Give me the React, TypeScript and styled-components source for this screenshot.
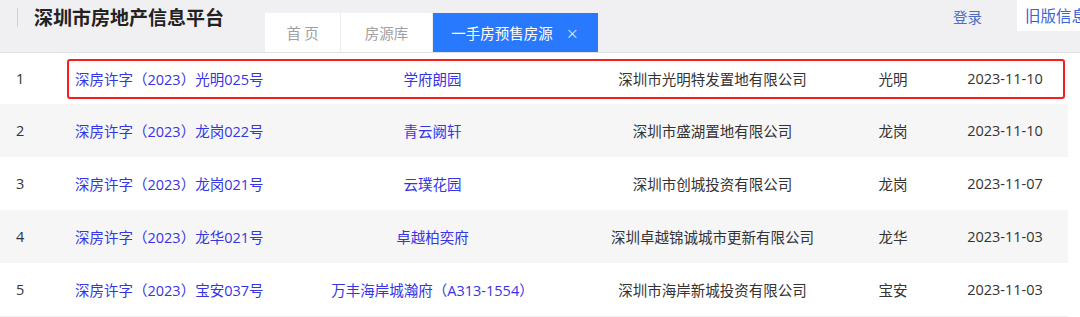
import { FC } from "react";
import styled, { createGlobalStyle } from "styled-components";

type Row = {
    permit: string;
    project: string;
    company: string;
    district: string;
    date: string;
};

const rows: Row[] = [
    { permit: "深房许字（2023）光明025号", project: "学府朗园", company: "深圳市光明特发置地有限公司", district: "光明", date: "2023-11-10" },
    { permit: "深房许字（2023）龙岗022号", project: "青云阙轩", company: "深圳市盛湖置地有限公司", district: "龙岗", date: "2023-11-10" },
    { permit: "深房许字（2023）龙岗021号", project: "云璞花园", company: "深圳市创城投资有限公司", district: "龙岗", date: "2023-11-07" },
    { permit: "深房许字（2023）龙华021号", project: "卓越柏奕府", company: "深圳卓越锦诚城市更新有限公司", district: "龙华", date: "2023-11-03" },
    { permit: "深房许字（2023）宝安037号", project: "万丰海岸城瀚府（A313-1554）", company: "深圳市海岸新城投资有限公司", district: "宝安", date: "2023-11-03" },
];

const GlobalStyle = createGlobalStyle`
body {
    margin: 0;
    background: #fff;
    overflow: hidden;
    font-family: "Open Sans", "Noto Sans CJK SC", sans-serif;
}
`;

const App: FC = () => {
    return (
        <>
            <GlobalStyle />
            <Header>
                <Divider />
                <Title>深圳市房地产信息平台</Title>
                <Tabs>
                    <Tab $width={76}>首 页</Tab>
                    <Tab $width={92}>房源库</Tab>
                    <Tab $width={165} $active>
                        一手房预售房源<Close>×</Close>
                    </Tab>
                </Tabs>
                <Login>登录</Login>
                <OldSite>旧版信息</OldSite>
            </Header>
            <Table>
                {rows.map((el, i) => (
                    <TableRow key={i} $striped={i % 2 === 1}>
                        <NumCell>{i + 1}</NumCell>
                        <PermitCell>{el.permit}</PermitCell>
                        <ProjectCell>{el.project}</ProjectCell>
                        <Cell>{el.company}</Cell>
                        <Cell>{el.district}</Cell>
                        <DateCell>{el.date}</DateCell>
                        {i === 0 && <Highlight />}
                    </TableRow>
                ))}
            </Table>
        </>
    );
};

export default App;

const Header = styled.header`
display: flex;
align-items: flex-start;
height: 52px;
background: #f0f0f3;
border-bottom: 1px solid #e0e0e5;
`;

const Divider = styled.span`
width: 1px;
height: 19px;
margin: 8px 0 0 17px;
background: #d0d0d5;
`;

const Title = styled.h1`
margin: 3px 0 0 16px;
font-size: 19px;
font-weight: 700;
line-height: 28px;
color: #222;
font-family: "Noto Sans CJK SC", sans-serif;
`;

const Tabs = styled.nav`
display: flex;
align-self: flex-end;
margin-left: 41px;
height: 39px;
`;

const Tab = styled.div<{ $active?: boolean; $width: number }>`
box-sizing: border-box;
display: flex;
align-items: center;
justify-content: center;
width: ${(p) => p.$width}px;
white-space: nowrap;
font-size: 14.5px;
font-family: "Noto Sans CJK SC", sans-serif;
background: ${(p) => (p.$active ? "#2979ff" : "#fff")};
color: ${(p) => (p.$active ? "#fff" : "#a0a0a5")};
border-right: 1px solid ${(p) => (p.$active ? "#2979ff" : "#ededf0")};
`;

const Close = styled.span`
margin-left: 13px;
font-size: 13px;
color: #e8efff;
`;

const Login = styled.a`
margin: 6px 0 0 auto;
line-height: 22px;
font-size: 14.5px;
color: #4a6fc4;
font-family: "Noto Sans CJK SC", sans-serif;
`;

const OldSite = styled.a`
margin-left: 35px;
width: 55px;
height: 31px;
padding-left: 8px;
background: #fff;
font-size: 15.5px;
line-height: 30px;
color: #3a63d6;
white-space: nowrap;
overflow: hidden;
font-family: "Noto Sans CJK SC", sans-serif;
`;

const Table = styled.section`
width: 1068px;
border-bottom: 1px solid #eeeeee;
`;

const TableRow = styled.div<{ $striped: boolean }>`
position: relative;
display: grid;
grid-template-columns: 67px 233px 265px 295px 66px 142px;
align-items: center;
height: 53px;
font-size: 14.5px;
color: #333;
background: ${(p) => (p.$striped ? "#f6f6f7" : "#fff")};

&:first-child {
    height: 51px;
}
`;

const Cell = styled.div`
text-align: center;
white-space: nowrap;
`;

const NumCell = styled(Cell)`
text-align: left;
padding-left: 16px;
`;

const PermitCell = styled(Cell)`
text-align: left;
padding-left: 8px;
color: #3535e6;
`;

const ProjectCell = styled(Cell)`
color: #3535e6;
`;

const DateCell = styled(Cell)`
padding-left: 16px;
`;

const Highlight = styled.span`
position: absolute;
left: 67px;
top: 6px;
width: 994px;
height: 36px;
border: 2px solid #ff1a1a;
border-radius: 3px;
pointer-events: none;
`;
